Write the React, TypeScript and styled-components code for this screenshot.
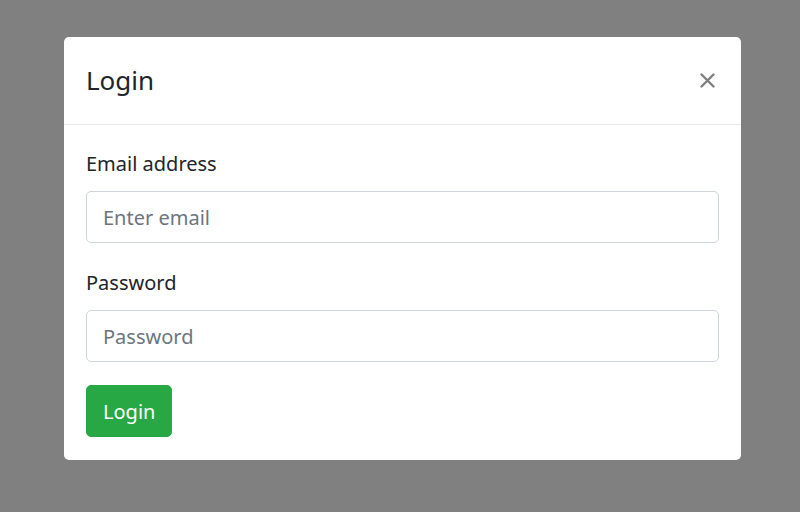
import styled, { createGlobalStyle } from 'styled-components'

const GlobalStyle = createGlobalStyle`
  html, body {
    margin: 0;
    padding: 0;
    background: #808080;
  }
  body {
    font-family: 'Noto Sans', 'Open Sans', sans-serif;
    color: #212529;
  }
`

export default function App() {
  return (
    <>
      <GlobalStyle />
      <Backdrop>
        <Dialog>
          <Header>
            <Title>Login</Title>
            <CloseButton aria-label="Close">
              <svg width="15" height="15" viewBox="0 0 15 15">
                <path d="M1.5 1.5 L13.5 13.5 M13.5 1.5 L1.5 13.5" stroke="currentColor" strokeWidth="2.4" strokeLinecap="round" />
              </svg>
            </CloseButton>
          </Header>
          <Body>
            <Field>
              <Label htmlFor="email">Email address</Label>
              <Input id="email" type="email" placeholder="Enter email" />
            </Field>
            <Field>
              <Label htmlFor="password">Password</Label>
              <Input id="password" type="password" placeholder="Password" />
            </Field>
            <SubmitButton type="button">Login</SubmitButton>
          </Body>
        </Dialog>
      </Backdrop>
    </>
  )
}

const Backdrop = styled.div`
  width: 800px;
  height: 512px;
  padding-top: 37px;
  box-sizing: border-box;
`

const Dialog = styled.div`
  width: 677px;
  margin-left: 64px;
  background: #fff;
  border-radius: 5px;
  overflow: hidden;
`

const Header = styled.div`
  height: 88px;
  box-sizing: border-box;
  padding: 0 26px 0 22px;
  display: flex;
  align-items: center;
  justify-content: space-between;
  border-bottom: 1px solid #e5e7ea;
`

const Title = styled.h5`
  margin: 0;
  font-size: 26px;
  font-weight: 400;
  line-height: 1.2;
`

const CloseButton = styled.button`
  border: 0;
  background: transparent;
  padding: 0;
  color: #000;
  opacity: 0.5;
  display: flex;
  cursor: pointer;
`

const Body = styled.div`
  padding: 24px 22px 23px;
  display: flex;
  flex-direction: column;
  align-items: flex-start;
  gap: 25px;
`

const Field = styled.div`
  display: flex;
  flex-direction: column;
  gap: 12px;
  align-self: stretch;
`

const Label = styled.label`
  font-size: 20px;
  line-height: 30px;
`

const Input = styled.input`
  height: 52px;
  box-sizing: border-box;
  border: 1px solid #ced4da;
  border-radius: 5px;
  padding: 0 16px;
  font-family: inherit;
  font-size: 20px;
  color: #495057;
  &::placeholder {
    color: #6c757d;
  }
`

const SubmitButton = styled.button`
  margin-top: -2px;
  height: 52px;
  padding: 0 16px;
  border: 1px solid #28a745;
  border-radius: 5px;
  background: #28a745;
  color: #fff;
  font-family: inherit;
  font-size: 20px;
  cursor: pointer;
`
